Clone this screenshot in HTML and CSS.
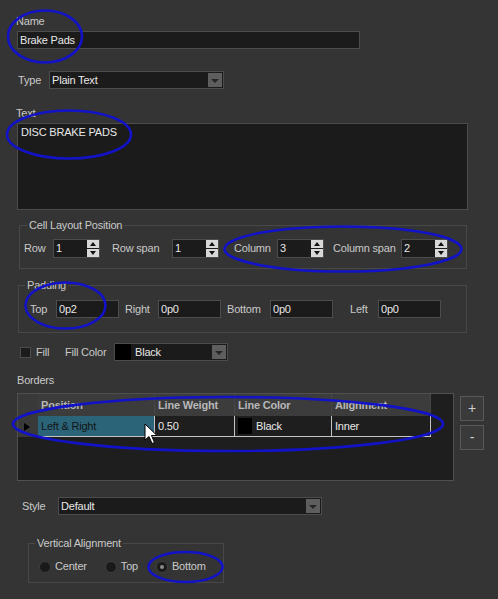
FILE: index.html
```html
<!DOCTYPE html>
<html lang="en">
<head>
  <meta charset="UTF-8">
  <meta name="viewport" content="width=device-width, initial-scale=1.0">
  <title>Cell Properties</title>
  <link rel="stylesheet" href="styles.css">
</head>
<body>

  <div class="panel">
    <div class="label name-label">Name</div>
    <div class="input name-input">Brake Pads</div>

    <div class="type-row">
      <span class="type-label">Type</span>
      <div class="select type-select"><span class="select-text">Plain Text</span><span class="drop"></span></div>
    </div>

    <div class="label text-label">Text</div>
    <div class="input textarea">DISC BRAKE PADS</div>

    <fieldset class="group cell-group">
      <legend>Cell Layout Position</legend>
      <div class="cell-row">
        <span class="cl cl-row">Row</span>
        <div class="spin"><span class="spin-val">1</span><span class="spin-btns"><span class="up"></span><span class="down"></span></span></div>
        <span class="cl cl-rowspan">Row span</span>
        <div class="spin"><span class="spin-val">1</span><span class="spin-btns"><span class="up"></span><span class="down"></span></span></div>
        <span class="cl cl-col">Column</span>
        <div class="spin"><span class="spin-val">3</span><span class="spin-btns"><span class="up"></span><span class="down"></span></span></div>
        <span class="cl cl-colspan">Column span</span>
        <div class="spin"><span class="spin-val">2</span><span class="spin-btns"><span class="up"></span><span class="down"></span></span></div>
      </div>
    </fieldset>

    <fieldset class="group padding-group">
      <legend>Padding</legend>
      <div class="pad-row">
        <span class="pl pl-top">Top</span>
        <div class="input pad-input">0p2</div>
        <span class="pl pl-right">Right</span>
        <div class="input pad-input">0p0</div>
        <span class="pl pl-bottom">Bottom</span>
        <div class="input pad-input">0p0</div>
        <span class="pl pl-left">Left</span>
        <div class="input pad-input">0p0</div>
      </div>
    </fieldset>

    <div class="fill-row">
      <span class="checkbox"></span>
      <span class="fill-label">Fill</span>
      <span class="fill-color-label">Fill Color</span>
      <div class="select fill-select"><span class="swatch"></span><span class="select-text">Black</span><span class="drop"></span></div>
    </div>

    <div class="label borders-label">Borders</div>
    <div class="borders">
      <div class="grid-box">
        <div class="grid-head">
          <span class="gh gh-corner"></span>
          <span class="gh">Position</span>
          <span class="gh">Line Weight</span>
          <span class="gh">Line Color</span>
          <span class="gh">Alignment</span>
        </div>
        <div class="grid-row">
          <span class="gr gr-head"><span class="row-arrow"></span></span>
          <span class="gr gr-selected">Left &amp; Right</span>
          <span class="gr">0.50</span>
          <span class="gr"><span class="cell-swatch"></span>Black</span>
          <span class="gr">Inner</span>
        </div>
      </div>
      <div class="grid-buttons">
        <div class="btn">+</div>
        <div class="btn">-</div>
      </div>
    </div>

    <div class="style-row">
      <span class="style-label">Style</span>
      <div class="select style-select"><span class="select-text">Default</span><span class="drop"></span></div>
    </div>

    <fieldset class="group valign-group">
      <legend>Vertical Alignment</legend>
      <div class="radio-row">
        <span class="radio-opt"><span class="radio"></span>Center</span>
        <span class="radio-opt"><span class="radio"></span>Top</span>
        <span class="radio-opt"><span class="radio checked"></span>Bottom</span>
      </div>
    </fieldset>
  </div>

  <!-- annotation marks drawn over the screenshot -->
  <svg class="marks" width="498" height="599" viewBox="0 0 498 599">
    <g fill="none" stroke="#1212c8" stroke-width="2.6">
      <ellipse cx="45" cy="36.5" rx="37" ry="26"/>
      <ellipse cx="69" cy="134.5" rx="62" ry="24"/>
      <ellipse cx="343" cy="249" rx="118.5" ry="22.5"/>
      <ellipse cx="65.5" cy="305.5" rx="40" ry="23"/>
      <ellipse cx="228" cy="424" rx="215" ry="27"/>
      <ellipse cx="185.5" cy="567" rx="37" ry="15"/>
    </g>
    <path d="M145 424 L145 440 L149 436.5 L152 443.5 L154.5 442.5 L151.5 435.5 L157 435.5 Z" fill="#fff" stroke="#000" stroke-width="1" stroke-linejoin="round"/>
  </svg>

</body>
</html>
```

FILE: styles.css
```css
body {
  margin: 0;
  background-color: #343434;
  color: #c9c9c9;
  font-family: "Liberation Sans", Arial, sans-serif;
  font-size: 11px;
  line-height: 13px;
  letter-spacing: -0.2px;
  position: relative;
  width: 498px;
  height: 599px;
  overflow: hidden;
}
.panel {
  padding: 15px 0 0 17px;
}
.label {
  height: 13px;
}
.name-label, .text-label {
  margin-left: -1px;
}
.input, .select, .spin {
  box-sizing: border-box;
  height: 18px;
  background-color: #1b1b1b;
  border: 1px solid #4c4c4c;
  color: #e8e8e8;
}
.input {
  line-height: 16px;
  padding: 0 2px;
}
.name-input {
  width: 343px;
  margin-top: 3px;
}
.type-row {
  display: flex;
  align-items: center;
  margin-top: 22px;
  padding-left: 1px;
}
.type-label {
  width: 31px;
}
.select {
  display: flex;
  align-items: center;
}
.select-text {
  flex: 1;
  padding-left: 2px;
}
.drop {
  width: 14px;
  height: 14px;
  margin-right: 1px;
  background-color: #5e5e5e;
  display: flex;
  align-items: center;
  justify-content: center;
}
.drop::after {
  content: "";
  border-left: 4px solid transparent;
  border-right: 4px solid transparent;
  border-top: 4px solid #262626;
  margin-top: 2px;
}
.type-select {
  width: 175px;
}
.text-label {
  margin-top: 18px;
}
.textarea {
  width: 451px;
  height: 87px;
  margin-top: 3px;
  padding: 2px 3px;
  line-height: 13px;
}

/* group boxes */
.group {
  margin: 0;
  border: 1px solid #484848;
  box-sizing: border-box;
  min-width: 0;
}
.group legend {
  padding: 0 2px;
  line-height: 13px;
}
.cell-group {
  margin: 9px 0 0 2px;
  width: 448px;
  padding: 7px 0 10px 4px;
}
.cell-group legend {
  margin-left: 3px;
}
.cell-row, .pad-row {
  display: flex;
  align-items: center;
}
.cl-row { width: 29px; }
.cl-rowspan { width: 60px; padding-left: 12px; }
.cl-col { width: 43px; padding-left: 15px; }
.cl-colspan { width: 68px; padding-left: 9px; }
.spin {
  display: flex;
  width: 47px;
  height: 19px;
}
.spin-val {
  flex: 1;
  padding-left: 2px;
  line-height: 17px;
}
.spin-btns {
  width: 12px;
  display: flex;
  flex-direction: column;
  gap: 1px;
}
.up, .down {
  flex: 1;
  background-color: #d8d8d8;
  display: flex;
  align-items: center;
  justify-content: center;
}
.up::after, .down::after {
  content: "";
  border-left: 3px solid transparent;
  border-right: 3px solid transparent;
}
.up::after { border-bottom: 4px solid #111; }
.down::after { border-top: 4px solid #111; }

.padding-group {
  margin: 10px 0 0 1px;
  width: 449px;
  padding: 8px 0 14px 11px;
}
.padding-group legend {
  margin-left: -5px;
}
.pl-top { width: 26px; }
.pl-right { width: 33px; padding-left: 6px; }
.pl-bottom { width: 43px; padding-left: 6px; }
.pl-left { width: 28px; padding-left: 17px; }
.pad-input {
  width: 63px;
}

.fill-row {
  display: flex;
  align-items: center;
  margin-top: 10px;
}
.checkbox {
  width: 11px;
  height: 11px;
  box-sizing: border-box;
  margin-left: 3px;
  background-color: #1b1b1b;
  border: 1px solid #4c4c4c;
}
.fill-label {
  width: 29px;
  margin-left: 5px;
}
.fill-color-label {
  width: 49px;
}
.fill-select {
  width: 114px;
}
.fill-select .select-text {
  padding-left: 4px;
}
.swatch {
  width: 16px;
  height: 16px;
  background-color: #000;
}

.borders-label {
  margin-top: 13px;
}
.borders {
  display: flex;
  margin-top: 6px;
}
.grid-box {
  width: 437px;
  height: 88px;
  box-sizing: border-box;
  background-color: #1e1e1e;
  border: 1px solid #505050;
}
.grid-head, .grid-row {
  display: grid;
  grid-template-columns: 20px 117px 80px 97px 99px;
}
.gh {
  height: 22px;
  line-height: 22px;
  background-color: #3c3c3c;
  border-right: 1px solid #464646;
  color: #b8b8b8;
  font-weight: bold;
  padding-left: 3px;
  box-sizing: border-box;
}
.gh-corner {
  background-color: #393939;
  border-right: none;
}
.gr {
  height: 21px;
  line-height: 20px;
  box-sizing: border-box;
  padding-left: 3px;
  color: #e8e8e8;
  border-right: 1px solid #c4c4c4;
  border-bottom: 1px solid #c4c4c4;
  display: flex;
  align-items: center;
}
.gr-head {
  background-color: #393939;
  border: none;
  padding-left: 6px;
}
.row-arrow {
  border-left: 6px solid #000;
  border-top: 4px solid transparent;
  border-bottom: 4px solid transparent;
}
.gr-selected {
  background-color: #2b6479;
  color: #141414;
}
.cell-swatch {
  width: 14px;
  height: 16px;
  background-color: #000;
  margin-right: 4px;
}
.grid-buttons {
  display: flex;
  flex-direction: column;
  gap: 4px;
  margin: 3px 0 0 6px;
}
.btn {
  width: 24px;
  height: 25px;
  box-sizing: border-box;
  background-color: #3a3a3a;
  border: 1px solid #585858;
  color: #d0d0d0;
  font-size: 14px;
  display: flex;
  align-items: center;
  justify-content: center;
}

.style-row {
  display: flex;
  align-items: center;
  margin-top: 16px;
}
.style-label {
  width: 36px;
  margin-left: 5px;
}
.style-select {
  width: 264px;
}

.valign-group {
  margin: 22px 0 0 11px;
  width: 196px;
  padding: 10px 0 9px 10px;
}
.valign-group legend {
  margin-left: -4px;
}
.radio-row {
  display: flex;
  align-items: center;
  gap: 18px;
}
.radio-opt {
  display: flex;
  align-items: center;
  gap: 4px;
}
.radio {
  width: 12px;
  height: 12px;
  box-sizing: border-box;
  border-radius: 50%;
  background-color: #1a1a1a;
  border: 1px solid #3e3e3e;
  display: flex;
  align-items: center;
  justify-content: center;
}
.radio.checked::after {
  content: "";
  width: 4px;
  height: 4px;
  border-radius: 50%;
  background-color: #8a8a8a;
}

.marks {
  position: absolute;
  top: 0;
  left: 0;
  pointer-events: none;
}
```
